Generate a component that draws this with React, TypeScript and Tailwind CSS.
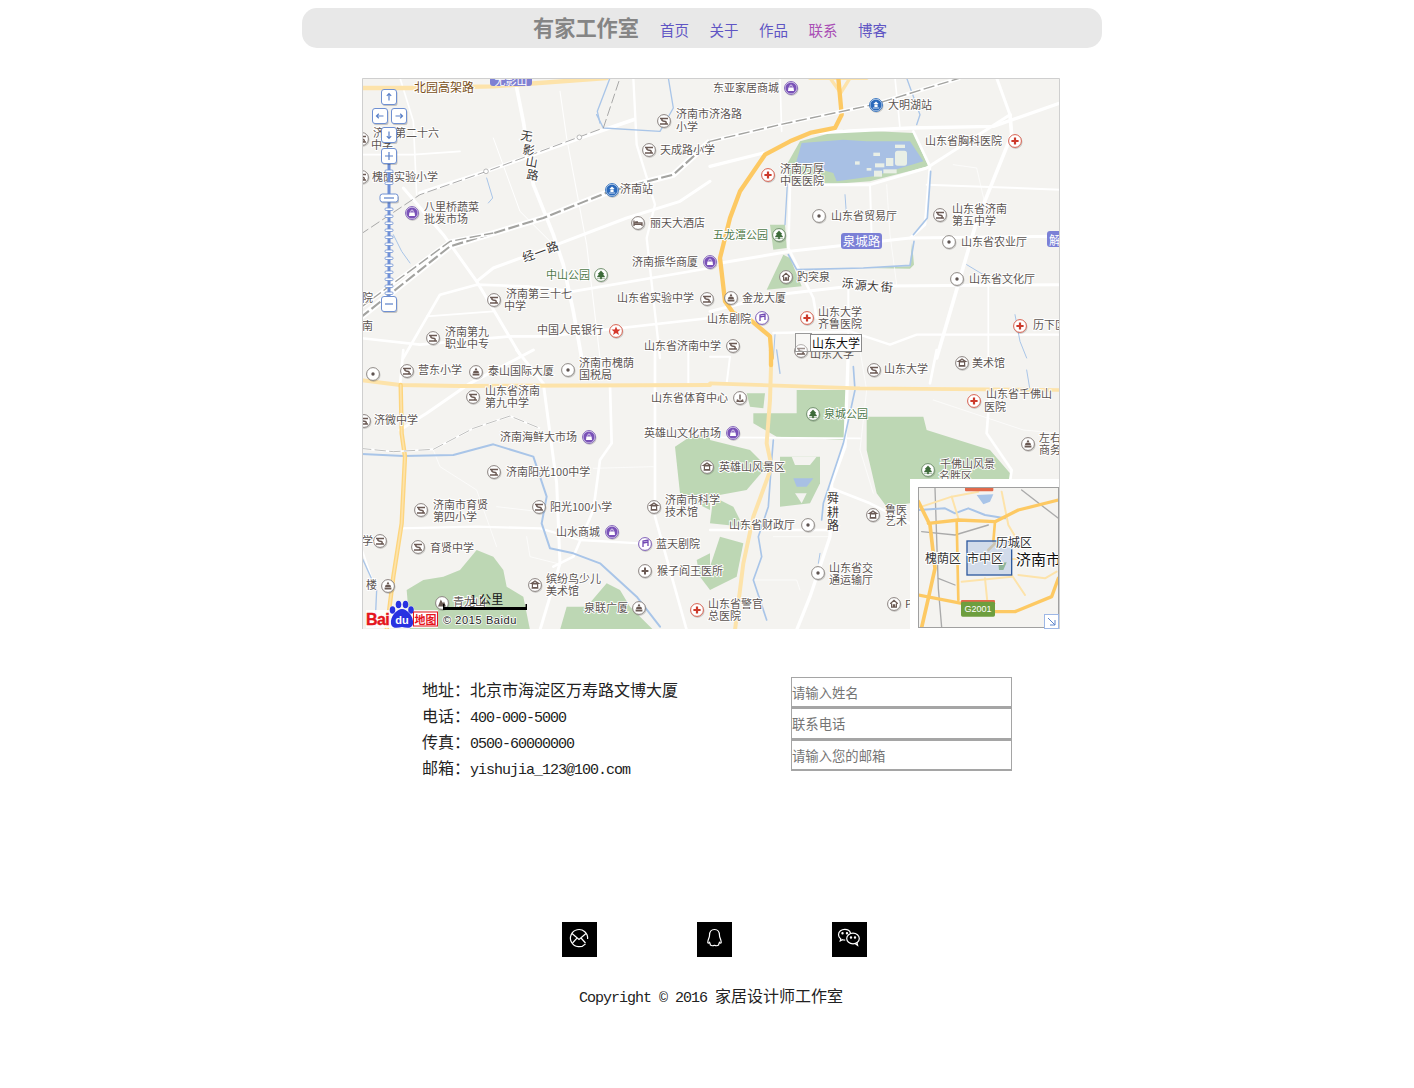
import React from "react";

const CJK = '"Noto Sans CJK SC","Noto Sans",sans-serif';
const BODY = '"Liberation Mono","Noto Sans CJK SC",monospace';

type Kind = "school" | "shop" | "hospital" | "star" | "station" | "park" | "dot" | "museum" | "pagoda" | "music" | "hotel" | "house" | "sport" | "hill" | "clinic";

function Poi({ k, x, y }: { k: Kind; x: number; y: number }) {
  const ring: Record<Kind, string> = {
    school: "#8b8380", shop: "#7d5cb8", hospital: "#d9604f", star: "#d9604f", station: "#2f6fbd", park: "#6f8f6b",
    dot: "#8f8a86", museum: "#8b8380", pagoda: "#8b8380", music: "#7d5cb8", hotel: "#8b8380", house: "#8b8380", sport: "#8b8380", hill: "#8b8380", clinic: "#8b8380",
  };
  const dark = "#6b5a54";
  return (
    <g transform={`translate(${x},${y})`}>
      <circle cx={0.6} cy={0.9} r={7} fill="#000" opacity={0.16} />
      <circle r={6.4} fill="#fff" stroke={ring[k]} strokeWidth={1} />
      {k === "school" && (
        <>
          <path d="M-4 -2.6H4M-1.5 -2.6C-3 -1 -2 .2 0 .2S3 1.2 1.5 3M-4 3H4" stroke={dark} strokeWidth={1.5} fill="none" />
        </>
      )}
      {k === "shop" && (
        <>
          <circle r={5.6} fill="#7a52b8" />
          <path d="M-2.6 -.6H2.6L3 3H-3Z" fill="#fff" />
          <path d="M-1.2 -.6V-1.8A1.2 1.2 0 0 1 1.2 -1.8V-.6" fill="none" stroke="#fff" strokeWidth={0.7} />
        </>
      )}
      {k === "hospital" && <path d="M-3.6 0H3.6M0 -3.6V3.6" stroke="#cc3a2b" strokeWidth={2.2} />}
      {k === "clinic" && <path d="M-3.4 0H3.4M0 -3.4V3.4" stroke={dark} strokeWidth={2} />}
      {k === "star" && <path d="M0 -4.6L1.3 -1.4L4.5 -1.4L2 .7L3 4L0 2.1L-3 4L-2 .7L-4.5 -1.4L-1.3 -1.4Z" fill="#d5392c" />}
      {k === "station" && (
        <>
          <circle r={5.6} fill="#2a69bb" />
          <path d="M0 -3.4L2.6 -1H-2.6Z" fill="#fff" />
          <rect x={-1.6} y={-.6} width={3.2} height={2.6} fill="#fff" />
          <path d="M-3.2 3H3.2" stroke="#fff" strokeWidth={0.8} />
        </>
      )}
      {k === "park" && <path d="M0 -4.2L3 -1H1.8L3.8 2H-3.8L-1.8 -1H-3ZM-.7 2H.7V4H-.7ZM-4 3.5H4" fill="#3d6b3a" stroke="#3d6b3a" strokeWidth={0.4} />}
      {k === "dot" && <circle r={1.7} fill="#5e5451" />}
      {k === "museum" && <path d="M0 -4L3.6 -1.6H-3.6ZM-2.6 -1.2H2.6V2.6H-2.6ZM-3.4 3.2H3.4" fill="none" stroke={dark} strokeWidth={1.2} />}
      {k === "house" && <path d="M-3.8 -.2L0 -3.6L3.8 -.2M-2.4 -.6V3.2H2.4V-.6M-.6 3.2V.8H.6V3.2" fill="none" stroke={dark} strokeWidth={1.2} />}
      {k === "pagoda" && <path d="M0 -4.4L1.6 -1.6H-1.6ZM-2.4 -1H2.4L3 1H-3ZM-3.4 1.6H3.4V3.6H-3.4Z" fill={dark} />}
      {k === "hill" && <path d="M-4 3.4L-1.2 -3.6L1 .2L2 -1.4L4 3.4Z" fill={dark} />}
      {k === "music" && <path d="M-2 3V-3L3 -4V2M-2 -1L3 -2" fill="none" stroke="#7249b3" strokeWidth={1.3} />}
      {k === "hotel" && <path d="M-4 -2.6V3M-4 1.4H4V3M-4 -.2H4V1.4M-2.8 -1.2H0" fill="none" stroke={dark} strokeWidth={1.3} />}
      {k === "sport" && <path d="M-3.6 3.2H3.6M-2.8 1.6A3 3 0 0 0 2.8 1.6M0 -3.6V1.6" fill="none" stroke={dark} strokeWidth={1.4} />}
    </g>
  );
}

const pois: [Kind, number, number][] = [
  ["shop", 791, 88], ["school", 664, 121], ["station", 876, 105], ["hospital", 1015, 141], ["school", 649, 150], ["hospital", 768, 175],
  ["station", 612, 190], ["school", 362, 139], ["school", 362, 177], ["shop", 412, 213], ["dot", 819, 216], ["school", 940, 215], ["hotel", 638, 223],
  ["park", 779, 235], ["dot", 949, 242], ["shop", 710, 262], ["park", 601, 275], ["house", 786, 277], ["dot", 957, 279], ["school", 494, 300],
  ["school", 707, 299], ["pagoda", 731, 298], ["music", 762, 318], ["hospital", 807, 318], ["hospital", 1020, 326], ["school", 433, 338], ["star", 616, 331],
  ["school", 733, 346], ["school", 801, 351], ["school", 407, 371], ["dot", 373, 374], ["pagoda", 476, 372], ["dot", 568, 370], ["school", 874, 370], ["museum", 962, 363],
  ["school", 473, 397], ["sport", 740, 398], ["hospital", 974, 401], ["school", 364, 421], ["park", 813, 414], ["shop", 589, 437], ["shop", 733, 433],
  ["pagoda", 1028, 444], ["school", 494, 472], ["museum", 707, 467], ["park", 928, 470], ["school", 421, 510], ["school", 539, 507], ["museum", 654, 507],
  ["museum", 873, 515], ["dot", 808, 525], ["shop", 612, 532], ["music", 645, 544], ["school", 418, 547], ["school", 380, 541], ["clinic", 645, 571],
  ["dot", 818, 573], ["museum", 535, 585], ["pagoda", 388, 586], ["hill", 442, 603], ["pagoda", 639, 608], ["hospital", 697, 610], ["house", 894, 604],
];

const GREEN = "#4f7a4a";
const labels: [string, number, number, string?][] = [
  ["东亚家居商城", 713, 88], ["济南市济洛路", 676, 114], ["小学", 676, 127], ["大明湖站", 888, 105], ["山东省胸科医院", 925, 141], ["天成路小学", 660, 150],
  ["济南万厚", 780, 169], ["中医医院", 780, 181], ["济南站", 620, 189], ["济", 373, 133], ["第二十六", 395, 133], ["中学", 371, 145], ["槐荫实验小学", 372, 177],
  ["八里桥蔬菜", 424, 207], ["批发市场", 424, 219], ["山东省贸易厅", 831, 216], ["山东省济南", 952, 209], ["第五中学", 952, 221], ["丽天大酒店", 650, 223],
  ["五龙潭公园", 713, 235, GREEN], ["山东省农业厅", 961, 242], ["济南振华商厦", 632, 262], ["中山公园", 546, 275, GREEN], ["趵突泉", 797, 277], ["山东省文化厅", 969, 279],
  ["济南第三十七", 506, 294], ["中学", 504, 306], ["山东省实验中学", 617, 298], ["金龙大厦", 742, 298], ["山东剧院", 707, 319], ["山东大学", 818, 312], ["齐鲁医院", 818, 324],
  ["历下区", 1033, 325], ["院", 362, 298], ["南", 362, 326], ["济南第九", 445, 332], ["职业中专", 445, 344], ["中国人民银行", 537, 330], ["山东省济南中学", 644, 346],
  ["营东小学", 418, 370], ["泰山国际大厦", 488, 371], ["济南市槐荫", 579, 363], ["国税局", 579, 375], ["山东大学", 884, 369], ["美术馆", 972, 363],
  ["山东省济南", 485, 391], ["第九中学", 485, 403], ["山东省体育中心", 651, 398], ["山东省千佛山", 986, 394], ["医院", 984, 407], ["济微中学", 374, 420],
  ["泉城公园", 824, 414, GREEN], ["济南海鲜大市场", 500, 437], ["英雄山文化市场", 644, 433], ["左右", 1039, 438], ["商务", 1039, 450], ["济南阳光100中学", 506, 472],
  ["英雄山风景区", 719, 467], ["千佛山风景", 940, 464], ["名胜区", 939, 476], ["济南市育贤", 433, 505], ["第四小学", 433, 517], ["阳光100小学", 550, 507],
  ["济南市科学", 665, 500], ["技术馆", 665, 512], ["鲁医", 885, 510], ["艺术", 885, 521], ["山东省财政厅", 729, 525], ["山水商城", 556, 532], ["蓝天剧院", 656, 544],
  ["育贤中学", 430, 548], ["学", 362, 541], ["猴子阎王医所", 657, 571], ["山东省交", 829, 568], ["通运输厅", 829, 580], ["缤纷鸟少儿", 546, 579], ["美术馆", 546, 591],
  ["楼", 366, 585], ["青龙山", 453, 602], ["泉联广厦", 584, 608], ["山东省警官", 708, 604], ["总医院", 708, 616], ["P", 905, 604],
];

const roadLabels: [string, number, number, number][] = [
  ["无", 527, 135, 10], ["影", 529, 149, 10], ["山", 532, 161, 10], ["路", 533, 174, 10], ["经", 528, 255, -20], ["一", 540, 251, -20], ["路", 552, 246, -20],
  ["泺", 848, 282, 5], ["源", 861, 284, 5], ["大", 873, 285, 5], ["街", 887, 286, 5], ["舜", 833, 497, 0], ["耕", 833, 511, 0], ["路", 833, 524, 0],
];

type Line = [string, string, number];
const R = "#ffffff";
const B = "#a9c5e8";
const Y = "#fde3aa";
const O = "#fdc963";
const G = "#bdd7b4";

function Lines({ items }: { items: Line[] }) {
  return (
    <>
      {items.map(([p, c, w], i) => (
        <polyline key={i} points={p} fill="none" stroke={c} strokeWidth={w} strokeLinejoin="round" strokeLinecap="round" />
      ))}
    </>
  );
}

function Rail({ p, w = 12 }: { p: string; w?: number }) {
  return (
    <>
      <polyline points={p} fill="none" stroke="#fff" strokeWidth={w} />
      <polyline points={p} fill="none" stroke="#a3a3a0" strokeWidth={w * 0.35} strokeDasharray="34 10" />
    </>
  );
}

function MapQ1() {
  return (
    <g transform="translate(-2,0) scale(.33333)">
      <Lines
        items={[
          ["470,30 490,130 520,320 580,470 610,560 640,700 665,840", R, 11],
          ["180,345 380,280 660,180 820,125", R, 11],
          ["130,330 250,470 350,610 480,830", R, 9],
          ["820,0 830,200 885,380 860,480 900,840", R, 7],
          ["350,610 400,570 590,500 800,420 960,370 1050,310", R, 9],
          ["130,840 240,650 350,620 500,625 640,640 1050,570", R, 8],
          ["0,780 180,800 450,775 560,775 1050,720", R, 8],
          ["200,715 400,700", R, 5],
          ["600,40 620,180 680,500 720,840", R, 3],
          ["400,180 480,400 600,520", R, 3],
          ["0,230 160,230 300,220", R, 5],
          ["120,0 160,130 170,350", R, 5],
          ["0,30 160,30 400,25 740,0", Y, 13],
          ["710,110 730,150 900,160 940,90 925,0", B, 4],
          ["750,0 712,100 720,135", B, 4],
          ["380,300 398,360 385,375", B, 3],
          ["100,470 125,520 150,555", B, 3],
        ]}
      />
      <polyline points="0,470 180,350 380,280 730,150 780,0" fill="none" stroke="#999" strokeWidth={2.5} strokeDasharray="30 10" />
      <Rail p="0,720 270,505 550,420 750,340 940,290 1050,190" w={18} />
      <Rail p="0,690 270,490 400,465" w={12} />
      <circle cx={378} cy={280} r={7} fill="#fff" stroke="#999" strokeWidth={2} />
      <circle cx={658} cy={178} r={7} fill="#fff" stroke="#999" strokeWidth={2} />
    </g>
  );
}

function MapQ2() {
  return (
    <g transform="translate(348,0) scale(.33333)">
      <polygon points="230,260 270,190 400,155 610,165 655,265 480,310 340,320 240,315" fill={G} />
      <polygon points="258,255 275,195 400,185 470,190 600,190 640,250 490,295 380,310 370,285 280,260" fill="#a8c0e4" />
      <g fill="#e9efe6">
        <rect x={555} y={218} width={36} height={45} rx={8} />
        <rect x={528} y={240} width={22} height={24} />
        <rect x={495} y={256} width={28} height={12} />
        <rect x={520} y={274} width={40} height={12} />
        <rect x={492} y={278} width={24} height={18} />
        <rect x={555} y={200} width={30} height={10} />
        <rect x={490} y={224} width={20} height={10} />
        <rect x={435} y={250} width={14} height={10} />
        <rect x={470} y={270} width={14} height={8} />
      </g>
      <polygon points="180,440 225,440 230,510 190,515" fill={G} />
      <polygon points="220,530 240,540 275,625 170,635" fill={G} />
      <polygon points="470,570 600,565 606,495 612,560 600,572" fill={G} />
      <Lines
        items={[
          ["0,265 160,225", R, 10],
          ["300,165 600,150 850,145 1050,75", R, 10],
          ["610,160 660,265 645,440 600,480", R, 8],
          ["240,320 480,320 650,270 900,110 860,0", R, 9],
          ["900,110 905,170 800,430 680,840", R, 11],
          ["240,320 235,510 310,660 320,720", R, 8],
          ["480,320 485,480", R, 6],
          ["650,320 1050,335", R, 6],
          ["0,560 240,520 600,480 1050,475", R, 9],
          ["0,700 200,650 420,625 1050,620", R, 9],
          ["190,765 420,760 540,800 620,770 1050,770", R, 7],
          ["415,625 415,840", R, 6],
          ["835,620 835,840", R, 5],
          ["210,0 215,160", R, 5],
          ["555,0 570,150", R, 5],
          ["530,320 540,470 560,620", R, 2],
          ["730,260 800,270 830,400", R, 2],
          ["590,0 630,110 620,140", B, 4],
          ["232,320 225,440", B, 4],
          ["235,530 260,575 460,570 600,562 612,490", B, 5],
          ["662,280 652,420 610,470", B, 5],
          ["770,560 820,590", B, 3],
          ["915,710 930,790 950,840", B, 3],
          ["405,350 410,420 440,430", B, 3],
          ["190,840 195,770", B, 3],
          ["300,0 470,0", Y, 12],
          ["360,0 392,45 420,0", Y, 10],
          ["385,0 395,110 375,150 300,165 240,190 165,230 90,340 60,420 30,540 45,670 70,705 120,725 180,775 185,840", O, 13],
        ]}
      />
      <Rail p="0,190 210,140 490,80 750,0" w={12} />
    </g>
  );
}

function MapQ3() {
  return (
    <g transform="translate(-2,272) scale(.33333)">
      <polygon points="140,720 190,690 250,680 300,660 350,600 400,620 430,660 440,710 490,740 510,840 150,840" fill={G} />
      <polygon points="620,770 680,770 740,700 780,720 810,770 880,840 600,840" fill={G} />
      <polygon points="945,290 990,260 1050,250 1050,480 990,450 960,430" fill={G} />
      <polygon points="1010,630 1050,610 1050,720 1020,680" fill={G} />
      <Lines
        items={[
          ["130,0 120,105", R, 8],
          ["120,240 200,190 330,100 520,0", R, 9],
          ["470,0 550,100 590,400 600,640 540,840", R, 9],
          ["750,105 755,280 720,330 700,480 640,620 580,650", R, 8],
          ["885,0 885,500 980,840", R, 8],
          ["985,0 985,100", R, 6],
          ["120,535 350,530 540,535 660,570 840,580", R, 7],
          ["220,300 240,350 350,420 410,590", R, 2],
          ["500,560 510,620 590,640", R, 2],
          ["410,470 540,485", R, 2],
          ["880,350 700,355", R, 2],
          ["0,580 40,700", R, 5],
          ["0,610 50,720 45,830", B, 4],
          ["0,312 130,318 280,315 400,283 520,320 560,440 545,520 570,595 640,610 720,640 830,740 900,830", B, 6],
          ["0,90 120,105 300,108 1050,105", Y, 12],
          ["122,105 125,250 135,320 125,520 100,680 80,840", "#fdd57e", 13],
          ["122,105 125,250 135,320 125,520 100,680 80,840", Y, 5],
        ]}
      />
      <Rail p="0,295 100,305 220,298 340,235 450,198 540,235" w={6} />
    </g>
  );
}

function MapQ4() {
  return (
    <g transform="translate(348,272) scale(.33333)">
      <polygon points="130,190 260,190 260,120 410,120 410,270 200,260 130,220" fill={G} />
      <polygon points="470,200 640,200 650,240 840,300 900,370 900,400 600,400 600,460 530,470 500,430 470,300" fill={G} />
      <polygon points="210,320 330,320 330,400 300,460 210,470" fill={G} />
      <polygon points="0,270 120,300 170,350 110,420 0,440" fill={G} />
      <polygon points="10,440 70,470 100,530 0,520" fill={G} />
      <polygon points="30,560 100,580 80,680 0,720 0,650" fill={G} />
      <polygon points="110,130 165,130 160,175 120,170" fill={G} />
      <polygon points="245,320 320,320 300,345 255,345" fill="#f4f3f0" />
      <polygon points="250,385 310,385 290,410 260,410" fill="#a8c0e4" />
      <polygon points="255,430 290,430 275,460" fill="#f4f3f0" />
      <Lines
        items={[
          ["415,0 405,290 365,400 360,560 300,740 260,840", R, 10],
          ["365,415 480,460 600,520", R, 8],
          ["0,262 450,265", R, 5],
          ["0,540 360,540", R, 7],
          ["680,0 660,100", R, 8],
          ["840,120 830,250 905,360 900,395", R, 8],
          ["450,0 470,120 450,300 490,430", R, 2],
          ["670,150 790,190 940,240 1050,250", R, 2],
          ["190,560 360,560", R, 2],
          ["130,690 260,690 270,720", R, 2],
          ["0,20 60,20 50,100", R, 6],
          ["430,50 435,120 400,280 340,460 335,510", B, 5],
          ["190,270 185,330 175,470 145,560 155,620 130,690 170,810", B, 5],
          ["200,0 210,70", B, 4],
          ["330,610 325,640", B, 3],
          ["950,60 960,120", B, 3],
          ["0,100 450,115 1050,120", Y, 11],
          ["183,50 180,150 170,280 185,350 130,500 100,640 75,840", Y, 12],
          ["183,0 183,45", O, 13],
        ]}
      />
    </g>
  );
}

function Inset() {
  return (
    <g>
      <rect x={910} y={479} width={150} height={150} fill="#fff" />
      <clipPath id="mini">
        <rect x={919} y={488} width={140} height={140} />
      </clipPath>
      <g clipPath="url(#mini)">
        <rect x={919} y={488} width={140} height={140} fill="#f4f3f0" />
        <g transform="translate(905,475) scale(.33333)">
          <polygon points="215,60 265,58 255,80 235,88" fill="#a8c4e8" />
          <Lines
            items={[
              ["90,40 100,340 110,457", "#aaa", 4],
              ["50,170 150,180 250,150", "#aaa", 4],
              ["350,45 460,130", "#aaa", 4],
              ["100,310 150,330", "#aaa", 4],
              ["40,105 120,100 150,115 190,100 240,120 300,130", "#a8c4e8", 6],
              ["50,95 140,65 220,50", Y, 6],
              ["140,65 160,130", Y, 6],
              ["290,50 310,150 340,200", Y, 6],
              ["340,300 420,310 455,290", Y, 6],
              ["320,300 360,360", Y, 6],
              ["170,320 320,305", Y, 6],
              ["240,310 250,410", Y, 6],
              ["320,252 350,252", Y, 6],
              ["40,80 75,150 90,280 70,370 50,457", O, 11],
              ["70,145 160,135 270,140 340,105 460,75", O, 10],
              ["155,135 160,375", O, 8],
              ["40,360 170,385 260,410 330,410 440,365 460,310", O, 10],
              ["270,140 265,200", O, 8],
              ["270,205 250,225", "#e6bc5e", 8],
            ]}
          />
          <rect x={186} y={198} width={134} height={102} fill="#bccbe6" fillOpacity={0.62} stroke="#2f5a9f" strokeWidth={4} />
          <polygon points="280,265 305,262 295,285 282,285" fill="#8fb59a" />
          <rect x={180} y={37} width={85} height={12} rx={3} fill="#e2694a" />
          <rect x={168} y={375} width={102} height={12} rx={3} fill="#e2694a" />
          <rect x={168} y={380} width={102} height={45} rx={5} fill="#6d9e3e" />
        </g>
        <text x={978} y={609} fontSize={9} fill="#fff" textAnchor="middle" dominantBaseline="central" fontFamily='"Liberation Sans",sans-serif'>G2001</text>
        {([["历城区", 996, 541, 12], ["槐荫区", 925, 557, 12], ["市中区", 967, 557, 12], ["济南市", 1016, 558, 15]] as [string, number, number, number][]).map(([t, x, y, s]) => (
          <text key={t} x={x} y={y} fontSize={s} fill={s > 12 ? "#111" : "#333"} dominantBaseline="central" stroke="#fff" strokeWidth={2} paintOrder="stroke" fontFamily={CJK}>{t}</text>
        ))}
      </g>
      <rect x={918.5} y={487.5} width={140} height={140} fill="none" stroke="#a0a0a0" />
      <rect x={1044.5} y={614.5} width={14} height={14} fill="#fff" stroke="#9db7e6" />
      <path d="M1048 618L1055 625M1055 620V625H1050" fill="none" stroke="#5f86cc" strokeWidth={1} />
    </g>
  );
}

function Btn({ x, y, w = 15, h = 15, d }: { x: number; y: number; w?: number; h?: number; d: string }) {
  return (
    <g>
      <rect x={x - w / 2 + 1} y={y - h / 2 + 1.5} width={w} height={h} rx={2.5} fill="#000" opacity={0.2} />
      <rect x={x - w / 2} y={y - h / 2} width={w} height={h} rx={2.5} fill="#fff" stroke="#6f90d2" strokeWidth={1} />
      <path d={d} transform={`translate(${x},${y})`} fill="none" stroke="#5a80c8" strokeWidth={1.2} />
    </g>
  );
}

function Controls() {
  const ticks = [171, 183, 209, 216, 223, 230, 237, 244, 251, 258, 265, 272, 279, 286, 293];
  return (
    <g>
      <Btn x={389} y={97} d="M0 3.5V-3.5M-2.2 -1.2L0 -3.5L2.2 -1.2" />
      <Btn x={380} y={116} d="M3.5 0H-3.5M-1.2 -2.2L-3.5 0L-1.2 2.2" />
      <Btn x={399} y={116} d="M-3.5 0H3.5M1.2 -2.2L3.5 0L1.2 2.2" />
      <Btn x={389} y={135} d="M0 -3.5V3.5M-2.2 1.2L0 3.5L2.2 1.2" />
      <rect x={387.5} y={163} width={3} height={134} fill="#6f90d8" />
      {ticks.map((y) => (
        <rect key={y} x={385} y={y - 1} width={8} height={2.5} rx={1} fill="#fff" stroke="#6f90d2" strokeWidth={0.8} />
      ))}
      <Btn x={389} y={156} d="M-4 0H4M0 -4V4" />
      <Btn x={389} y={198} w={18} h={8} d="M-5 0H5" />
      <Btn x={389} y={304} d="M-4 0H4" />
    </g>
  );
}

function Logo() {
  return (
    <g>
      <g fontFamily='"Liberation Sans",sans-serif'>
        <rect x={366} y={610} width={72} height={18} fill="#fff" opacity={0.85} />
        <text x={366} y={624.5} fontSize={16} fontWeight={700} letterSpacing={-0.6} fill="#e5151d" stroke="#e5151d" strokeWidth={0.4}>Bai</text>
        <g fill="#2932e1" stroke="#fff" strokeWidth={0.8} paintOrder="stroke">
          <ellipse cx={392.5} cy={610} rx={2.8} ry={3.8} />
          <ellipse cx={398.5} cy={604.5} rx={2.8} ry={3.8} />
          <ellipse cx={405.5} cy={604.5} rx={2.8} ry={3.8} />
          <ellipse cx={411} cy={610} rx={2.8} ry={3.8} />
          <path d="M391 624C390 616 397 609 402 609C407 609 414 616 413 624C412 629 406 628 402 627C398 628 392 629 391 624Z" />
        </g>
        <text x={402} y={624} fontSize={11} fontWeight={700} fill="#fff" textAnchor="middle">du</text>
      </g>
      <rect x={413.5} y={612} width={24} height={14} fill="#fff" stroke="#e5151d" />
      <text x={414.5} y={619} fontSize={11} fontWeight={700} fill="#e5151d" dominantBaseline="central" fontFamily={CJK}>地图</text>
      <text x={443} y={624} fontSize={11} letterSpacing={0.6} fill="#222" stroke="#fff" strokeWidth={1.5} paintOrder="stroke" fontFamily='"Liberation Sans",sans-serif'>© 2015 Baidu</text>
      <rect x={443} y={607} width={84} height={3} fill="#000" />
      <rect x={443} y={604} width={1.5} height={4} fill="#000" />
      <rect x={525.5} y={604} width={1.5} height={4} fill="#000" />
      <text x={470} y={598.5} fontSize={12} fill="#111" dominantBaseline="central" fontFamily={CJK}>1 公里</text>
    </g>
  );
}

function BaiduMap() {
  return (
    <svg width={698} height={551} viewBox="0 0 698 551" className="block">
      <rect width={698} height={551} fill="#f4f3f0" />
      <MapQ3 />
      <MapQ4 />
      <MapQ1 />
      <MapQ2 />
      <g transform="translate(-362,-78)">
        <rect x={490} y={72} width={42} height={14} rx={3} fill="#7f80d2" />
        <text x={511} y={80} fontSize={11} fill="#fff" textAnchor="middle" dominantBaseline="central" fontFamily={CJK}>无影山</text>
        <text x={414} y={86.5} fontSize={12} fill="#7a5020" dominantBaseline="central" stroke="#fff" strokeWidth={2} paintOrder="stroke" fontFamily={CJK}>北园高架路</text>
        <rect x={841} y={233} width={41} height={16} rx={3} fill="#7b80d6" />
        <text x={861.5} y={240.5} fontSize={12.5} fill="#fff" textAnchor="middle" dominantBaseline="central" fontFamily={CJK}>泉城路</text>
        <rect x={1047} y={231} width={16} height={16} rx={3} fill="#7b80d6" />
        <text x={1049} y={239} fontSize={12} fill="#fff" dominantBaseline="central" fontFamily={CJK}>解</text>
        {pois.map(([k, x, y], i) => (
          <Poi key={i} k={k} x={x} y={y} />
        ))}
        <g fontSize={11} fontFamily={CJK} stroke="#fff" strokeWidth={1.8} paintOrder="stroke" transform="translate(0,-0.8)">
          {labels.map(([t, x, y, c], i) => (
            <text key={i} x={x} y={y} fill={c ?? "#5c5552"} dominantBaseline="central">{t}</text>
          ))}
        </g>
        <g fontSize={12} fontFamily={CJK} stroke="#fff" strokeWidth={2} paintOrder="stroke" fill="#3b3836">
          {roadLabels.map(([t, x, y, r], i) => (
            <text key={i} x={x} y={y} textAnchor="middle" dominantBaseline="central" transform={`rotate(${r} ${x} ${y})`}>{t}</text>
          ))}
        </g>
        <text x={810} y={352.5} fontSize={11} fill="#5c5552" dominantBaseline="central" fontFamily={CJK}>山东大学</text>
        <rect x={795.5} y={333.5} width={16} height={18} fill="#fff" fillOpacity={0.35} stroke="#999" />
        <rect x={810.5} y={334.5} width={51} height={17} fill="#fff" stroke="#8a8a8a" />
        <text x={812} y={342.5} fontSize={12} fill="#111" dominantBaseline="central" fontFamily={CJK}>山东大学</text>
        <Inset />
        <Controls />
        <Logo />
      </g>
      <path d="M.5 551V.5H697.5V551" fill="none" stroke="#cfcfcf" />
    </svg>
  );
}

const nav: [string, string][] = [
  ["首页", "text-[#5f55c4]"],
  ["关于", "text-[#5f55c4]"],
  ["作品", "text-[#5f55c4]"],
  ["联系", "text-[#a94fb5]"],
  ["博客", "text-[#5f55c4]"],
];

function Mono({ children }: { children: React.ReactNode }) {
  return <span className="text-[15px] tracking-[-1px] font-['Liberation_Mono',monospace]">{children}</span>;
}

const infos: [string, string, boolean][] = [
  ["地址：", "北京市海淀区万寿路文博大厦", false],
  ["电话：", "400-000-5000", true],
  ["传真：", "0500-60000000", true],
  ["邮箱：", "yishujia_123@100.com", true],
];

function Icon({ children }: { children: React.ReactNode }) {
  return (
    <div className="flex h-[35px] w-[35px] items-center justify-center bg-black">
      <svg width={35} height={35} viewBox="0 0 35 35" fill="none" stroke="#fff" strokeWidth={1.2}>
        {children}
      </svg>
    </div>
  );
}

export default function App() {
  return (
    <div className="h-[1088px] w-[1404px] bg-white pt-2 text-[#222]" style={{ fontFamily: BODY }}>
      <header className="mx-auto flex h-10 w-[800px] items-center justify-center rounded-[15px] bg-[#e8e8e8] pl-[16px]">
        <span className="mr-[21px] pt-[3px] text-[21.2px] font-bold leading-none text-[#858585] font-['Liberation_Serif','Noto_Sans_CJK_SC',serif]">有家工作室</span>
        <nav className="flex gap-[20.5px] pt-[4px] text-[14.5px] font-['Noto_Sans_CJK_SC',sans-serif]">
          {nav.map(([t, c]) => (
            <a key={t} className={c}>{t}</a>
          ))}
        </nav>
      </header>

      <div className="ml-[362px] mt-[30px] w-[698px]">
        <BaiduMap />
      </div>

      <section className="mt-[48px] flex items-start pl-[422px]">
        <div className="-mt-[1px] w-[369px] text-[16px] leading-[26px] font-['Noto_Sans_CJK_SC',sans-serif]">
          {infos.map(([a, b, m]) => (
            <p key={a} className="h-[26px]">
              {a}
              {m ? <Mono>{b}</Mono> : b}
            </p>
          ))}
        </div>
        <form className="flex w-[221px] flex-col">
          {["请输入姓名", "联系电话", "请输入您的邮箱"].map((p, i) => (
            <input
              key={p}
              placeholder={p}
              className={`w-full border border-[#a5a5a5] border-b-2 bg-white text-[13.33px] outline-none placeholder:text-[#757575] font-['Noto_Sans_CJK_SC',sans-serif] ${i === 1 ? "h-[32px]" : "h-[31px]"}`}
            />
          ))}
        </form>
      </section>

      <div className="ml-[562px] mt-[142px] flex gap-[100px]">
        <Icon>
          <path d="M23.5 21.8A8.6 8.6 0 1 1 25.6 17" />
          <path d="M10 11.5L17 17.5L24 11.5M10.5 21L15 16.2M19 16L23.5 21" />
        </Icon>
        <Icon>
          <path transform="translate(0,-1.5)" d="M17.5 9C13.5 9 12.5 12.5 12.5 15C12.5 17 11 19 10.8 21.5C10.7 23 11.6 22.8 12.6 21.8C13 23.3 13.5 24 13.4 24.6C15 25.8 16.5 25.2 17.5 24.8C18.5 25.2 20 25.8 21.6 24.6C21.5 24 22 23.3 22.4 21.8C23.4 22.8 24.3 23 24.2 21.5C24 19 22.5 17 22.5 15C22.5 12.5 21.5 9 17.5 9Z" />
        </Icon>
        <Icon>
          <g transform="translate(-1,-1.5)">
            <path d="M19.5 12.5C18.8 10.2 16.4 8.8 13.8 8.8C10.6 8.8 7.5 11 7.5 14.2C7.5 16 8.5 17.4 9.8 18.4L9.2 20.4L11.6 19.2C12.5 19.5 13.3 19.6 14.2 19.6" />
            <ellipse cx={22} cy={18} rx={6.3} ry={5.3} />
            <path d="M26 22.2L26.6 24.8L24 23" />
            <circle cx={11.5} cy={12.8} r={0.6} fill="#fff" />
            <circle cx={16} cy={12.8} r={0.6} fill="#fff" />
            <circle cx={20} cy={17} r={0.6} fill="#fff" />
            <circle cx={24} cy={17} r={0.6} fill="#fff" />
          </g>
        </Icon>
      </div>

      <footer className="ml-[579px] mt-[26px] text-[16px] leading-6 font-['Noto_Sans_CJK_SC',sans-serif]">
        <Mono>Copyright © 2016 </Mono>家居设计师工作室
      </footer>
    </div>
  );
}
